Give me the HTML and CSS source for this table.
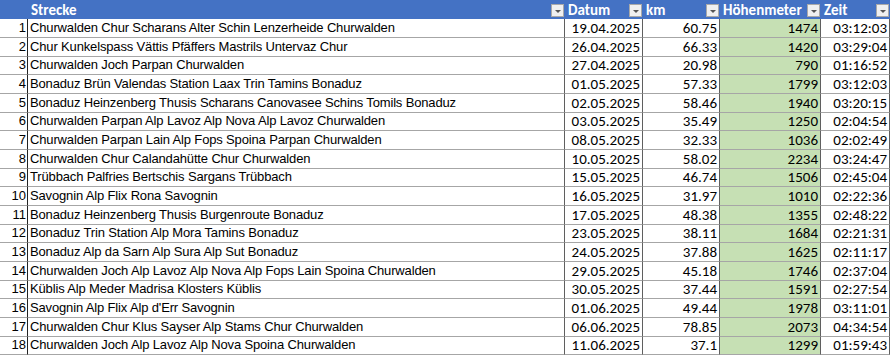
FILE: index.html
```html
<!DOCTYPE html>
<html>
<head>
<meta charset="utf-8">
<link rel="stylesheet" href="styles.css">
</head>
<body>
<div class="sheet">
  <div class="h idx"></div>
  <div class="h"><span>Strecke</span><i class="dd"></i></div>
  <div class="h"><span>Datum</span><i class="dd"></i></div>
  <div class="h"><span>km</span><i class="dd"></i></div>
  <div class="h"><span>Höhenmeter</span><i class="dd"></i></div>
  <div class="h"><span>Zeit</span><i class="dd"></i></div>

  <div class="c n">1</div><div class="c t">Churwalden Chur Scharans Alter Schin Lenzerheide Churwalden</div><div class="c d">19.04.2025</div><div class="c d">60.75</div><div class="c d g">1474</div><div class="c d">03:12:03</div>
  <div class="c n">2</div><div class="c t">Chur Kunkelspass Vättis Pfäffers Mastrils Untervaz Chur</div><div class="c d">26.04.2025</div><div class="c d">66.33</div><div class="c d g">1420</div><div class="c d">03:29:04</div>
  <div class="c n">3</div><div class="c t">Churwalden Joch Parpan Churwalden</div><div class="c d">27.04.2025</div><div class="c d">20.98</div><div class="c d g">790</div><div class="c d">01:16:52</div>
  <div class="c n">4</div><div class="c t">Bonaduz Brün Valendas Station Laax Trin Tamins Bonaduz</div><div class="c d">01.05.2025</div><div class="c d">57.33</div><div class="c d g">1799</div><div class="c d">03:12:03</div>
  <div class="c n">5</div><div class="c t">Bonaduz Heinzenberg Thusis Scharans Canovasee Schins Tomils Bonaduz</div><div class="c d">02.05.2025</div><div class="c d">58.46</div><div class="c d g">1940</div><div class="c d">03:20:15</div>
  <div class="c n">6</div><div class="c t">Churwalden Parpan Alp Lavoz Alp Nova Alp Lavoz Churwalden</div><div class="c d">03.05.2025</div><div class="c d">35.49</div><div class="c d g">1250</div><div class="c d">02:04:54</div>
  <div class="c n">7</div><div class="c t">Churwalden Parpan Lain Alp Fops Spoina Parpan Churwalden</div><div class="c d">08.05.2025</div><div class="c d">32.33</div><div class="c d g">1036</div><div class="c d">02:02:49</div>
  <div class="c n">8</div><div class="c t">Churwalden Chur Calandahütte Chur Churwalden</div><div class="c d">10.05.2025</div><div class="c d">58.02</div><div class="c d g">2234</div><div class="c d">03:24:47</div>
  <div class="c n">9</div><div class="c t">Trübbach Palfries Bertschis Sargans Trübbach</div><div class="c d">15.05.2025</div><div class="c d">46.74</div><div class="c d g">1506</div><div class="c d">02:45:04</div>
  <div class="c n">10</div><div class="c t">Savognin Alp Flix Rona Savognin</div><div class="c d">16.05.2025</div><div class="c d">31.97</div><div class="c d g">1010</div><div class="c d">02:22:36</div>
  <div class="c n">11</div><div class="c t">Bonaduz Heinzenberg Thusis Burgenroute Bonaduz</div><div class="c d">17.05.2025</div><div class="c d">48.38</div><div class="c d g">1355</div><div class="c d">02:48:22</div>
  <div class="c n">12</div><div class="c t">Bonaduz Trin Station Alp Mora Tamins Bonaduz</div><div class="c d">23.05.2025</div><div class="c d">38.11</div><div class="c d g">1684</div><div class="c d">02:21:31</div>
  <div class="c n">13</div><div class="c t">Bonaduz Alp da Sarn Alp Sura Alp Sut Bonaduz</div><div class="c d">24.05.2025</div><div class="c d">37.88</div><div class="c d g">1625</div><div class="c d">02:11:17</div>
  <div class="c n">14</div><div class="c t">Churwalden Joch Alp Lavoz Alp Nova Alp Fops Lain Spoina Churwalden</div><div class="c d">29.05.2025</div><div class="c d">45.18</div><div class="c d g">1746</div><div class="c d">02:37:04</div>
  <div class="c n">15</div><div class="c t">Küblis Alp Meder Madrisa Klosters Küblis</div><div class="c d">30.05.2025</div><div class="c d">37.44</div><div class="c d g">1591</div><div class="c d">02:27:54</div>
  <div class="c n">16</div><div class="c t">Savognin Alp Flix Alp d'Err Savognin</div><div class="c d">01.06.2025</div><div class="c d">49.44</div><div class="c d g">1978</div><div class="c d">03:11:01</div>
  <div class="c n">17</div><div class="c t">Churwalden Chur Klus Sayser Alp Stams Chur Churwalden</div><div class="c d">06.06.2025</div><div class="c d">78.85</div><div class="c d g">2073</div><div class="c d">04:34:54</div>
  <div class="c n">18</div><div class="c t">Churwalden Joch Alp Lavoz Alp Nova Spoina Churwalden</div><div class="c d">11.06.2025</div><div class="c d">37.1</div><div class="c d g">1299</div><div class="c d">01:59:43</div>
</div>
</body>
</html>
```
FILE: styles.css
```css
html, body {
  margin: 0;
  padding: 0;
  background: #ffffff;
}
.sheet {
  display: grid;
  grid-template-columns: 28px 537px 78px 77px 101px 69px;
  grid-template-rows: 19px repeat(6, 19px 19px 18px);
  width: 890px;
  overflow: hidden;
}
.h {
  background: #4472c4;
  color: #ffffff;
  font-family: Calibri, Carlito, Lato, "Open Sans", sans-serif;
  font-weight: bold;
  font-size: 15px;
  display: flex;
  align-items: flex-end;
  justify-content: space-between;
  padding: 0 1px 1px 3px;
  box-sizing: border-box;
  line-height: 16px;
}
.h.idx {
  padding: 0;
}
.dd {
  width: 13px;
  height: 13px;
  box-sizing: border-box;
  background: #f0f0f0;
  border: 1px solid #a9a9a9;
  display: flex;
  align-items: center;
  justify-content: center;
  margin-bottom: 1px;
  flex: none;
}
.dd::after {
  content: "";
  width: 0;
  height: 0;
  border-left: 3px solid transparent;
  border-right: 3px solid transparent;
  border-top: 3px solid #555555;
  margin-top: 1px;
}
.c {
  border-right: 1px solid #5f5f5f;
  border-bottom: 1px solid #a6a6a6;
  box-sizing: border-box;
  display: flex;
  align-items: flex-end;
  padding: 0 2px 2px 2px;
  font-size: 13px;
  line-height: 15px;
  color: #000000;
  white-space: nowrap;
  overflow: hidden;
}
.n {
  font-family: "Liberation Sans", Arial, sans-serif;
  justify-content: flex-end;
  border-right-color: #222222;
  padding-right: 1px;
}
.t {
  font-family: "Liberation Sans", Arial, sans-serif;
  letter-spacing: -0.15px;
}
.d {
  font-family: Calibri, Carlito, Lato, "Open Sans", sans-serif;
  font-size: 15px;
  justify-content: flex-end;
  padding-bottom: 1px;
}
.g {
  background: #c6e0b4;
}
```
